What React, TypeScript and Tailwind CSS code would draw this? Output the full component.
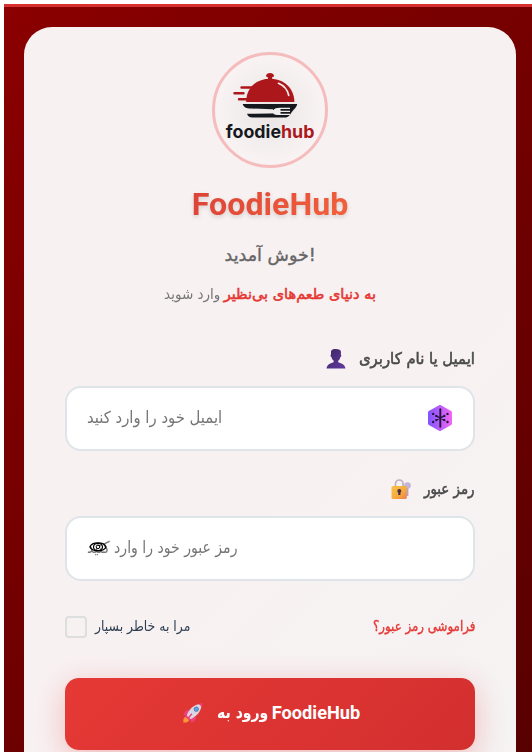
import { useLayoutEffect, useRef, useState } from "react";

type FitProps = { width: string; target: number; className?: string; dir?: "rtl" | "ltr"; children: string };

// A single line of text, scaled horizontally so that it fills its column.
function Fit({ width, target, className = "", dir = "rtl", children }: FitProps) {
  const ref = useRef<HTMLSpanElement>(null);
  const [scale, setScale] = useState(1);
  useLayoutEffect(() => {
    if (ref.current) setScale(target / ref.current.offsetWidth);
  }, [target, children]);
  const origin = dir === "rtl" ? "origin-right" : "origin-left";
  return (
    <span className={`flex shrink-0 ${width}`} dir={dir}>
      <span ref={ref} className={`inline-block shrink-0 whitespace-nowrap ${origin} ${className}`} style={{ transform: `scaleX(${scale})` }}>
        {children}
      </span>
    </span>
  );
}

function Logo() {
  return (
    <div className="flex h-[116px] w-[116px] items-center justify-center rounded-full border-[3px] border-[#f5bcbd] bg-[radial-gradient(circle,#e9e3e3_0%,#f2eded_38%,#f8f2f2_66%)]">
      <svg viewBox="0 0 110 110" className="h-[110px] w-[110px] shrink-0">
        <g fill="#ac171c">
          <path d="M51 21c0-4 8-4 8 0-.5 1-1.500 1.300-2 1.500v2h-4v-2c-.5-.2-1.500-.5-2-1.500z" />
          <path d="M31.200 47C31.200 33 41 23.700 55 23.700S79.200 33 79.400 47z" />
        </g>
        <g stroke="#ac171c" strokeWidth="2.400" strokeLinecap="round">
          <path d="M26.500 32.500h12M19.500 38.300h9M24 44.300h10" />
        </g>
        <path d="M63.500 28.300c6 2.500 9 6.500 10.200 12" fill="none" stroke="#f6eeee" strokeWidth="1.700" strokeLinecap="round" />
        <path d="M27.700 49h54.500c-.6 4-4 5.400-6.500 9.700-1.700 2.700-3.500 3.900-6.500 3.900H37.500c-3 0-5-1.500-5.500-4.100l26-.3v-4L36.200 53.500c-5 0-7.700-1.400-8.500-4.500z" fill="#15191e" />
        <path d="M31.500 55l26.500.3c1.500-2.300 5-2.900 9-2.500h8v1.300h-9.500v1.700h9.500v1.300h-9.500v1.700h9.500v1.100h-8c-3.500.4-7.500.2-9-1.700l-26.500.3z" fill="#f2eded" />
        <text x="10.800" y="82.800" textLength="88.600" lengthAdjust="spacingAndGlyphs" fontFamily="Inter, sans-serif" fontWeight="700" fontSize="18" fill="#15191e">
          foodie<tspan fill="#ac171c">hub</tspan>
        </text>
      </svg>
    </div>
  );
}

function PersonIcon() {
  return (
    <svg viewBox="0 0 20 22" className="h-[22px] w-[20px] shrink-0">
      <defs>
        <linearGradient id="person" x1="0" y1="0" x2="1" y2="1">
          <stop offset="0" stopColor="#3c2763" />
          <stop offset="1" stopColor="#623aa0" />
        </linearGradient>
      </defs>
      <path d="M5 3.500C5.500 1.600 7 1 10 1s4.800.8 5 3l-.2 2.400c.8.2.7 2-.4 2.500-.3 2-1.300 3.200-2.200 3.800v1.200c1 1.200 6.800 1.300 7.300 6.700H.5c.5-5.400 6-5.500 7.200-6.700v-1.200C6.500 12 5.800 10.800 5.500 9 4.300 8.300 4.200 6.700 5 6.400z" fill="url(#person)" />
    </svg>
  );
}

function LockIcon() {
  return (
    <svg viewBox="0 0 20 22" className="h-[22px] w-[20px] shrink-0">
      <defs>
        <linearGradient id="lock" x1="0" y1="0" x2="1" y2="1">
          <stop offset="0" stopColor="#f9c146" />
          <stop offset=".6" stopColor="#f7a83d" />
          <stop offset="1" stopColor="#ee7c54" />
        </linearGradient>
      </defs>
      <circle cx="16.500" cy="7.500" r="3.300" fill="#c4b5d2" />
      <path d="M15 10h2.400v8H15z" fill="#b4a3c8" />
      <path d="M4.500 9V5.800a3.800 3.800 0 017.600 0V9" fill="none" stroke="#bcaec8" strokeWidth="1.700" />
      <rect x=".5" y="8" width="15.300" height="13" rx="1.600" fill="url(#lock)" />
      <circle cx="8.300" cy="13" r="2" fill="#443044" />
      <path d="M7.500 13h1.700l.3 4h-2.300z" fill="#443044" />
    </svg>
  );
}

function RocketIcon() {
  return (
    <svg viewBox="0 0 22 22" className="h-[22px] w-[22px] shrink-0">
      <path d="M7 8C4 7.500 2.500 9.500 1.500 13l4 .3zM14 15c.5 3-1.500 4.700-5 5.600L8.600 16z" fill="#ef4178" />
      <path d="M1.500 20.500c-.7-4 1-6 3.500-5.500s3 3 1.200 4.400c-1.300 1-2.700 1-4.700 1.100z" fill="#fb9638" />
      <path d="M4.500 14.500C6 8 12 1.800 19.500 2c.3 7-5 13-12 15.500z" fill="#dcd5e5" />
      <path d="M16.500 2.300L20.800.7l-1.400 4.500c-.7-1.500-1.500-2.300-2.900-2.900zM4 13l5.200 4.600-1.500 1.200-4.900-4.300z" fill="#ef4178" />
      <circle cx="14.300" cy="7.200" r="2.200" fill="#55a9ec" stroke="#5d6b94" strokeWidth=".8" />
      <path d="M9.800 11.800L6 16.500" stroke="#ef4178" strokeWidth="1.400" />
    </svg>
  );
}

function HexagonIcon() {
  return (
    <svg viewBox="0 0 24 28" className="h-[28px] w-[24px] shrink-0">
      <defs>
        <linearGradient id="hexagon">
          <stop offset="0" stopColor="#8054ff" />
          <stop offset="1" stopColor="#f466f2" />
        </linearGradient>
      </defs>
      <path d="M12 .8l11.200 6.200q.8.500.8 1.400v11.200q0 .9-.8 1.400L12 27.200.8 21Q0 20.500 0 19.600V8.400Q0 7.500.8 7z" fill="url(#hexagon)" />
      <g stroke="#24143f" strokeLinecap="round">
        <path d="M12.300 5.300v17.400" strokeWidth="1.900" />
        <path d="M9 12.400l6.500 3.200M9 15.600l6.500-3.200" strokeWidth="1.400" />
      </g>
      <g fill="#24143f">
        <circle cx="5.200" cy="9.900" r="1.200" /><circle cx="8.300" cy="11.900" r="1.200" />
        <circle cx="19.500" cy="9.900" r="1.200" /><circle cx="16.300" cy="11.900" r="1.200" />
        <circle cx="5.200" cy="18" r="1.200" /><circle cx="8.300" cy="16.100" r="1.200" />
        <circle cx="19.500" cy="18" r="1.200" /><circle cx="16.300" cy="16.100" r="1.200" />
      </g>
    </svg>
  );
}

function EyeIcon() {
  return (
    <svg viewBox="0 0 18 12" className="absolute left-[22px] top-[23px] h-[12px] w-[18px]" fill="none" stroke="#000">
      <path d="M1 6C3 .6 15 .6 17 6 15 11 3 11 1 6z" strokeWidth="1.300" />
      <ellipse cx="9" cy="5.900" rx="4.500" ry="3.600" strokeWidth="1.200" />
      <circle cx="9" cy="5.800" r="1.800" strokeWidth="1" />
      <path d="M8.500 4.500h2v1.500" strokeWidth=".8" />
    </svg>
  );
}

export default function App() {
  return (
    <div className="h-[752px] w-[532px] overflow-hidden bg-white pl-1 pt-1 font-['DejaVu_Sans',sans-serif]">
      <div className="h-[748px] border-t-[3px] border-[#d63031] bg-[linear-gradient(135deg,#8b0000_0%,#580000_100%)] px-5 pt-5">
        <main className="flex h-[760px] w-[492px] flex-col items-center rounded-t-[28px] bg-[linear-gradient(135deg,#f8f1f2_0%,#f8f1f2_55%,#f5f3f3_100%)] px-[41px] pt-[25px]">
          <Logo />
          <h1 className="mt-4 h-10 bg-[linear-gradient(135deg,#db4036,#f3633c)] bg-clip-text font-[Roboto] text-[32.200px] font-bold leading-10 text-transparent drop-shadow-[0_2px_2px_rgba(0,0,0,0.14)]">FoodieHub</h1>
          <div className="mt-[17px] flex h-7 items-center text-[17.500px] text-[#666]">
            <Fit width="w-[91px]" target={91} dir="ltr" className="[-webkit-text-stroke:0.4px_#666]">خوش آمدید!</Fit>
          </div>
          <p className="mt-[14px] flex h-6 items-center gap-1 text-[14.500px]" dir="rtl">
            <Fit width="w-[152px]" target={152} className="text-[#e53935] [-webkit-text-stroke:0.6px_#e53935]">به دنیای طعم‌های بی‌نظیر</Fit>
            <Fit width="w-[56px]" target={56} className="text-[#777]">وارد شوید</Fit>
          </p>
          <form className="flex w-full flex-col">
            <div className="mt-[40px] flex h-6 items-center gap-[13px] text-[16px] text-[#4a4a4a]" dir="rtl">
              <Fit width="w-[116px]" target={116} className="[-webkit-text-stroke:0.6px_#4a4a4a]">ایمیل یا نام کاربری</Fit>
              <PersonIcon />
            </div>
            <div className="mt-[15px] flex h-[65px] items-center justify-between rounded-[16px] border-2 border-[#dfe4e8] bg-white pb-px pl-5 pr-[21px] text-[16.500px] text-[#757575]">
              <Fit width="w-[135px]" target={135}>ایمیل خود را وارد کنید</Fit>
              <HexagonIcon />
            </div>
            <div className="mt-[26px] flex h-6 items-center gap-[13px] text-[16px] text-[#4a4a4a]" dir="rtl">
              <Fit width="w-[51px]" target={51} className="[-webkit-text-stroke:0.6px_#4a4a4a]">رمز عبور</Fit>
              <LockIcon />
            </div>
            <div className="relative mt-[15px] flex h-[65px] items-center rounded-[16px] border-2 border-[#dfe4e8] bg-white px-5 pb-px text-[16.500px] text-[#757575]">
              <Fit width="w-[150px]" target={150}>رمز عبور خود را وارد کنید</Fit>
              <EyeIcon />
            </div>
            <div className="mt-[35px] flex h-[22px] items-center justify-between text-[14px]" dir="rtl">
              <span className="flex pb-[2px]"><Fit width="w-[102px]" target={102} className="text-[#e53935] [-webkit-text-stroke:0.4px_#e53935]">فراموشی رمز عبور؟</Fit></span>
              <div className="flex items-center gap-2 text-[#2c3e50]">
                <span className="flex pb-[2px]"><Fit width="w-[95px]" target={95}>مرا به خاطر بسپار</Fit></span>
                <span className="h-[22px] w-[22px] rounded-[4px] border-2 border-[#dcdedf]" />
              </div>
            </div>
            <button type="button" dir="rtl" className="mt-10 flex h-[72px] items-center justify-center rounded-[14px] bg-[linear-gradient(135deg,#e53935,#d32f2f)] pb-[3px] pl-[2px] text-[17px] font-bold text-white shadow-[0_8px_30px_rgba(229,57,53,0.3)]">
              <span className="font-[Roboto] text-[18.200px]">FoodieHub</span>
              <span className="mr-1 flex"><Fit width="w-[51px]" target={51}>ورود به</Fit></span>
              <span className="mr-[13px] flex"><RocketIcon /></span>
            </button>
          </form>
        </main>
      </div>
    </div>
  );
}
